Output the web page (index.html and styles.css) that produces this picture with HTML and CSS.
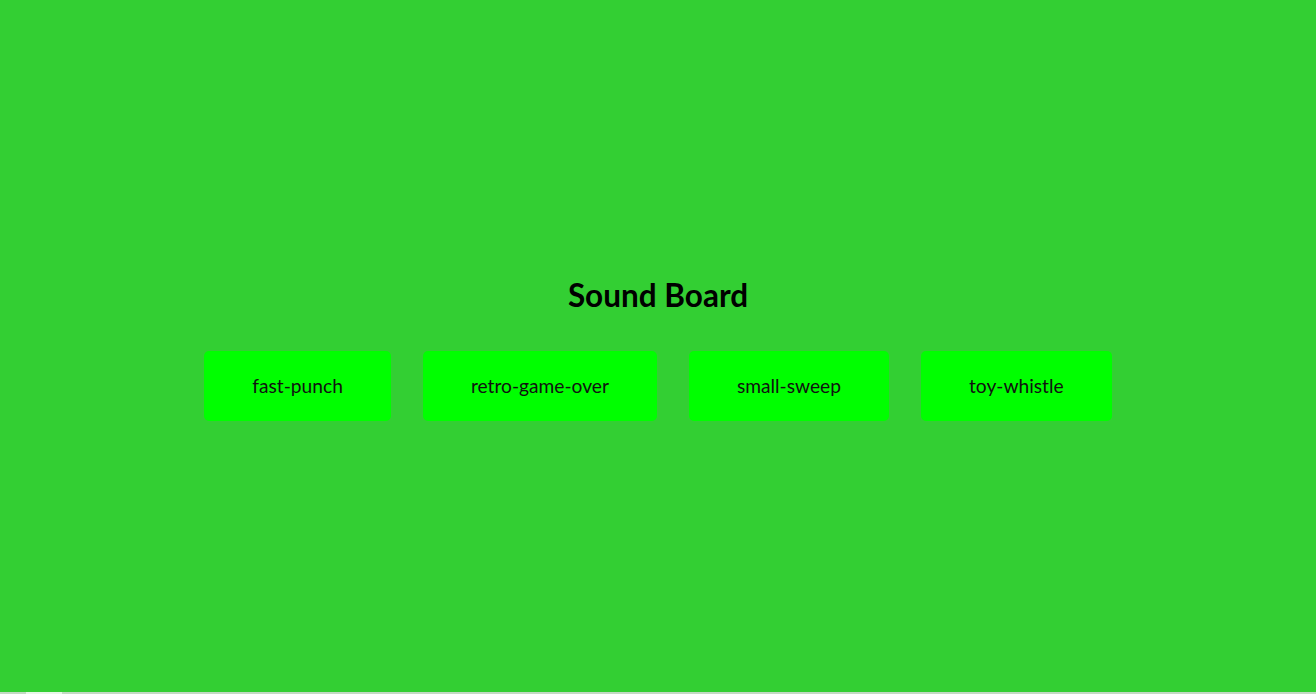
FILE: index.html
```html
<!DOCTYPE html>
<html lang="en">
<head>
<meta charset="utf-8">
<title>Sound Board</title>
<link rel="stylesheet" href="styles.css">
</head>
<body>
  <main class="board">
    <h1 class="title">Sound Board</h1>
    <div class="buttons">
      <button class="btn">fast-punch</button>
      <button class="btn">retro-game-over</button>
      <button class="btn">small-sweep</button>
      <button class="btn">toy-whistle</button>
    </div>
  </main>
  <div class="strip"><div class="strip-thumb"></div></div>
</body>
</html>
```
FILE: styles.css
```css
html, body {
  margin: 0;
  padding: 0;
}
body {
  background: #33cf33;
  font-family: Lato, "Open Sans", sans-serif;
  min-height: 100vh;
  display: flex;
  align-items: center;
  justify-content: center;
  overflow: hidden;
}
.board {
  display: flex;
  flex-direction: column;
  align-items: center;
  margin-bottom: 3px;
}
.title {
  font-size: 31.5px;
  font-weight: 700;
  line-height: 38px;
  margin: 21px 0 21px;
  color: #000;
}
.buttons {
  display: flex;
  justify-content: center;
}
.btn {
  font-family: Lato, "Open Sans", sans-serif;
  font-size: 19.2px;
  line-height: 22px;
  color: #111;
  background: #00ff00;
  border: none;
  border-radius: 5px;
  padding: 24px 48px;
  margin: 16px;
  cursor: pointer;
}
.strip {
  position: fixed;
  left: 0;
  right: 0;
  bottom: 0;
  height: 2px;
  background: #c4d9c4;
}
.strip-thumb {
  position: absolute;
  left: 26px;
  width: 36px;
  top: 0;
  bottom: 0;
  background: #e8f5e8;
}
```
